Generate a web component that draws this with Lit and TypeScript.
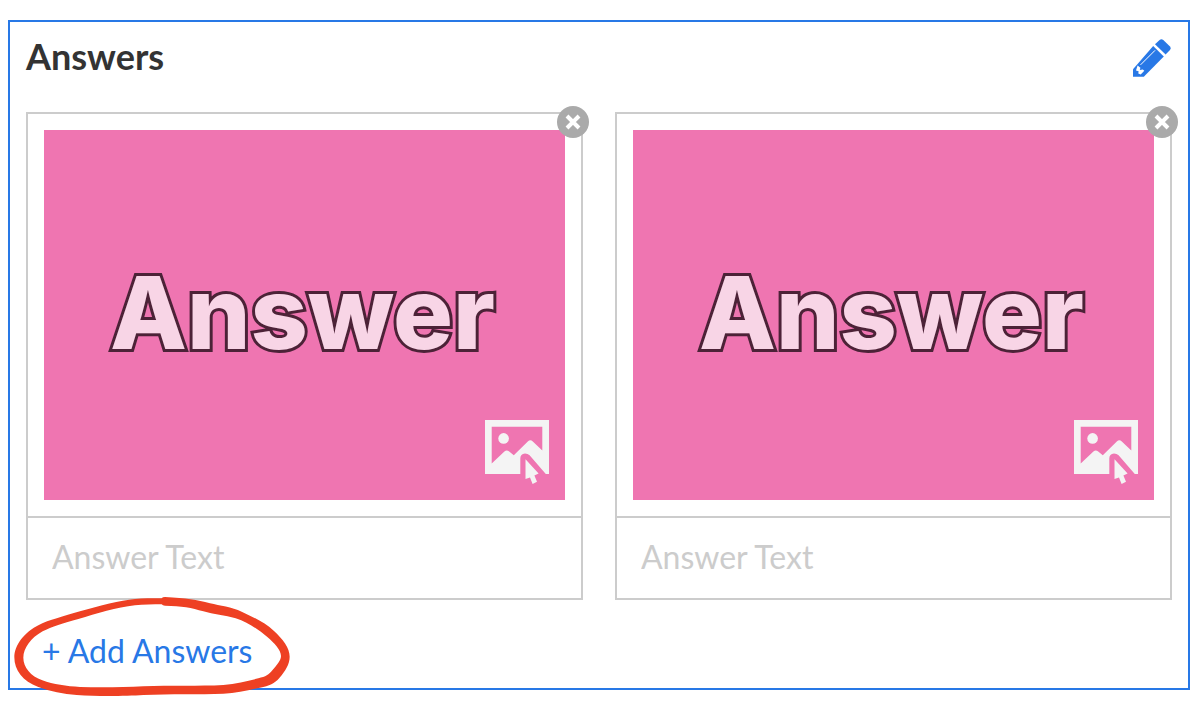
import { LitElement, html, css } from "lit";
import { customElement, property, state } from "lit/decorators.js";

const pencilIcon = html`<svg viewBox="0 0 40 40" width="40" height="40" aria-hidden="true">
  <path fill="#2878e6" d="M1 38.8V31.2L21.2 8L31.8 18.6L11.8 38.8Z" />
  <path fill="#2878e6" d="M23 6.3L27.6 1.9Q29.4 .4 31.3 2L38 8.6Q39.6 10.3 38 12L33.6 16.6Z" />
  <path stroke="#fff" stroke-width="1" stroke-linecap="round" d="M8.8 26.6L22.8 12.6" />
  <path fill="#fff" d="M5.6 27.5L8.4 29.7L7.8 32L10.8 31.4L12.3 32.8L8.7 36.4L6.3 35.4L6.6 33.2L4 32.4Z" />
</svg>`;

const pictureIcon = html`<svg viewBox="0 0 64 64" width="64" height="64" aria-hidden="true">
  <path
    fill="#f4f4f4"
    fill-rule="evenodd"
    d="M0 0H64V54H60.8L44.6 35.2Q42.8 33.4 40 33.4Q35.3 33.6 35.3 38.5V54H0ZM6.7 6.7V43.4L19.4 31.4Q21.8 29.4 24.2 31.4L28.8 35.2L42.8 21.4Q45.3 19.2 47.8 21.4L57.3 30.4V6.7Z"
  />
  <circle cx="18.6" cy="18.4" r="5.3" fill="#f4f4f4" />
  <path fill="#f4f4f4" d="M40.5 39.2L53.6 53.6L49.4 55.4L52 61.8L47.6 64L45 57.4L40.5 59Z" />
</svg>`;

const closeIcon = html`<svg viewBox="0 0 32 32" width="32" height="32" aria-hidden="true">
  <path stroke="#fff" stroke-width="4" d="M10 10L22 22M22 10L10 22" />
</svg>`;

@customElement("answer-card")
export class AnswerCard extends LitElement {
  @property({ type: Number }) index = 1;

  static styles = css`
    :host {
      display: block;
      position: relative;
      border: 2px solid #ccc;
      background: #fff;
      min-width: 0;
    }
    .media {
      padding: 16px;
      border-bottom: 2px solid #ccc;
    }
    .picture {
      position: relative;
      display: flex;
      align-items: center;
      justify-content: center;
      box-sizing: border-box;
      width: 100%;
      aspect-ratio: 521 / 370;
      padding: 0 4px 4px 0;
      border: 0;
      background: #ef75b1;
      cursor: pointer;
    }
    .word {
      font: 800 100px/120px Inter, sans-serif;
      color: #f8d5e6;
      -webkit-text-stroke: 6px #4c2237;
      paint-order: stroke fill;
    }
    .pick {
      position: absolute;
      right: 16px;
      bottom: 16px;
      display: flex;
    }
    .text {
      display: block;
      box-sizing: border-box;
      width: 100%;
      height: 80px;
      padding: 0 24px 4px;
      border: 0;
      outline: 0;
      background: transparent;
      color: #333;
      font: 400 32px/40px Lato, sans-serif;
    }
    .text::placeholder {
      color: #ccc;
      opacity: 1;
    }
    .remove {
      position: absolute;
      top: -8px;
      right: -8px;
      display: flex;
      width: 32px;
      height: 32px;
      padding: 0;
      border: 0;
      border-radius: 50%;
      background: #aaa;
      cursor: pointer;
    }
  `;

  private remove() {
    this.dispatchEvent(new CustomEvent("remove"));
  }

  render() {
    return html`
      <div class="media">
        <button class="picture" type="button" aria-label="Choose picture for Answer ${this.index}">
          <span class="word">Answer</span>
          <span class="pick">${pictureIcon}</span>
        </button>
      </div>
      <input class="text" type="text" placeholder="Answer Text" aria-label="Answer Text" />
      <button class="remove" type="button" aria-label="Remove answer" @click=${this.remove}>${closeIcon}</button>
    `;
  }
}

@customElement("app-root")
export class AppRoot extends LitElement {
  @state() private answers = [1, 2];

  static styles = css`
    :host {
      display: block;
      padding: 20px 12px 14px 8px;
      background: #fff;
      font-family: Lato, sans-serif;
    }
    .panel {
      border: 2px solid #2878e6;
      padding: 0 16px;
    }
    .head {
      display: flex;
      align-items: flex-start;
      justify-content: space-between;
      padding: 16px 0 34px;
    }
    .title {
      margin: 0;
      font-size: 36px;
      line-height: 36px;
      font-weight: 700;
      color: #333;
    }
    .edit {
      display: flex;
      padding: 0;
      border: 0;
      background: none;
      cursor: pointer;
    }
    .cards {
      display: grid;
      grid-template-columns: 1fr 1fr;
      gap: 32px;
    }
    .foot {
      position: relative;
      display: flex;
      align-items: center;
      height: 88px;
      padding: 14px 16px 0;
      box-sizing: border-box;
    }
    .add {
      padding: 0;
      border: 0;
      background: none;
      color: #2878e6;
      font: 400 32px/40px Lato, sans-serif;
      cursor: pointer;
    }
    .loop {
      position: absolute;
      left: -26px;
      top: -10px;
      pointer-events: none;
    }
  `;

  private add() {
    this.answers = [...this.answers, Math.max(0, ...this.answers) + 1];
  }

  private drop(id: number) {
    this.answers = this.answers.filter((a) => a !== id);
  }

  render() {
    return html`
      <section class="panel" aria-labelledby="title">
        <header class="head">
          <h2 class="title" id="title">Answers</h2>
          <button class="edit" type="button" aria-label="Edit answers">${pencilIcon}</button>
        </header>
        <div class="cards">
          ${this.answers.map((id) => html`<answer-card .index=${id} @remove=${() => this.drop(id)}></answer-card>`)}
        </div>
        <footer class="foot">
          <button class="add" type="button" @click=${this.add}>+ Add Answers</button>
          <svg class="loop" viewBox="0 0 900 342" width="300" height="114" aria-hidden="true">
            <path
              fill="#ee4023"
              fill-rule="evenodd"
              d="M485 25C455 25 430 25 405 27C360 31 300 47 240 64C190 79 145 91 118 104C72 126 43 166 43 202C43 240 68 274 115 291C150 304 190 312 230 315C300 320 380 318 430 315C510 311 600 314 670 311C710 309 745 300 780 293C808 288 824 280 838 264C856 243 869 222 869 200C869 174 848 147 822 123C795 98 760 81 725 65C695 51 660 47 630 40C590 29 560 24 495 21Q488 21 485 25ZM485 43C460 43 430 44 405 46C350 52 290 71 235 87C190 100 155 110 128 124C92 144 70 175 70 203C70 232 92 258 127 271C160 283 200 289 240 291C300 293 370 292 430 289C510 285 600 289 670 285C710 282 745 272 775 265C797 260 807 254 817 241C832 223 843 211 843 198C843 180 823 159 802 141C775 118 745 98 707 85C675 76 640 73 610 64C575 53 545 48 495 47Q488 47 485 43Z"
            />
          </svg>
        </footer>
      </section>
    `;
  }
}
